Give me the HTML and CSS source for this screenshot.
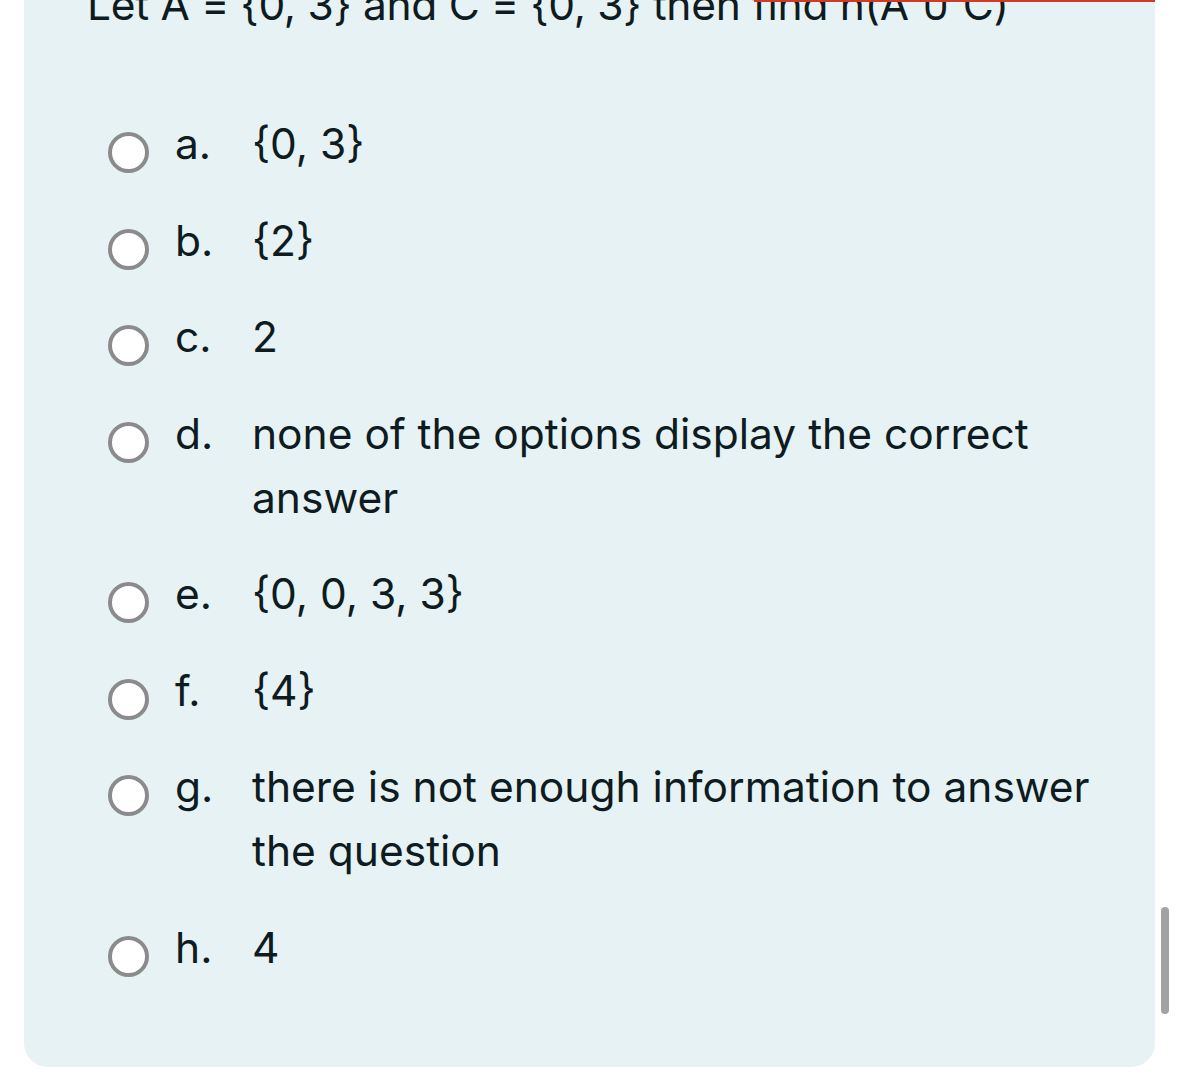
FILE: index.html
```html
<!DOCTYPE html>
<html lang="en">
<head>
<meta charset="utf-8">
<title>Question</title>
<link rel="stylesheet" href="styles.css">
</head>
<body>
<div class="flag-line"></div>
<div class="card">
  <p class="question">Let A = {0, 3} and C = {0, 3} then find n(A ∪ C)</p>
  <ul class="options">
    <li class="option"><span class="radio"></span><span class="letter">a.</span><span class="answer">{0, 3}</span></li>
    <li class="option"><span class="radio"></span><span class="letter">b.</span><span class="answer">{2}</span></li>
    <li class="option"><span class="radio"></span><span class="letter">c.</span><span class="answer">2</span></li>
    <li class="option"><span class="radio"></span><span class="letter">d.</span><span class="answer">none of the options display the correct answer</span></li>
    <li class="option"><span class="radio"></span><span class="letter">e.</span><span class="answer">{0, 0, 3, 3}</span></li>
    <li class="option"><span class="radio"></span><span class="letter">f.</span><span class="answer">{4}</span></li>
    <li class="option"><span class="radio"></span><span class="letter">g.</span><span class="answer">there is not enough information to answer the question</span></li>
    <li class="option"><span class="radio"></span><span class="letter">h.</span><span class="answer">4</span></li>
  </ul>
</div>
<div class="scrollbar"></div>
</body>
</html>
```
FILE: styles.css
```css
html, body {
  margin: 0;
  padding: 0;
  background: #ffffff;
  overflow: hidden;
}
body {
  position: relative;
  width: 1179px;
  height: 1089px;
  font-family: Inter, "Noto Sans", "Liberation Sans", sans-serif;
  color: #0e1b21;
  font-size: 42.5px;
  line-height: 64px;
}
.card {
  margin: -27px 24px 0 24px;
  width: 1131px;
  box-sizing: border-box;
  padding: 0 45px 87px 63px;
  background: #e6f2f4;
  border-radius: 0 0 24px 24px;
}
.question {
  margin: 0;
  white-space: nowrap;
  overflow: hidden;
  letter-spacing: -0.3px;
}
.options {
  list-style: none;
  margin: 75px 0 0 21px;
  padding: 0;
  display: flex;
  flex-direction: column;
  gap: 32.5px;
}
.option {
  display: flex;
  align-items: flex-start;
}
.radio {
  flex: none;
  width: 41px;
  height: 41px;
  box-sizing: border-box;
  border: 4px solid #8b8b8b;
  border-radius: 50%;
  background: #ffffff;
  margin-top: 20px;
}
.letter {
  flex: none;
  width: 77px;
  margin-left: 26px;
}
.answer {
  flex: 1;
}
.flag-line {
  position: absolute;
  top: 0;
  left: 754px;
  width: 401px;
  height: 2px;
  background: #d23a28;
  z-index: 2;
}
.scrollbar {
  position: absolute;
  left: 1161px;
  top: 907px;
  width: 8px;
  height: 107px;
  border-radius: 4px;
  background: #a2a2a2;
}
```
